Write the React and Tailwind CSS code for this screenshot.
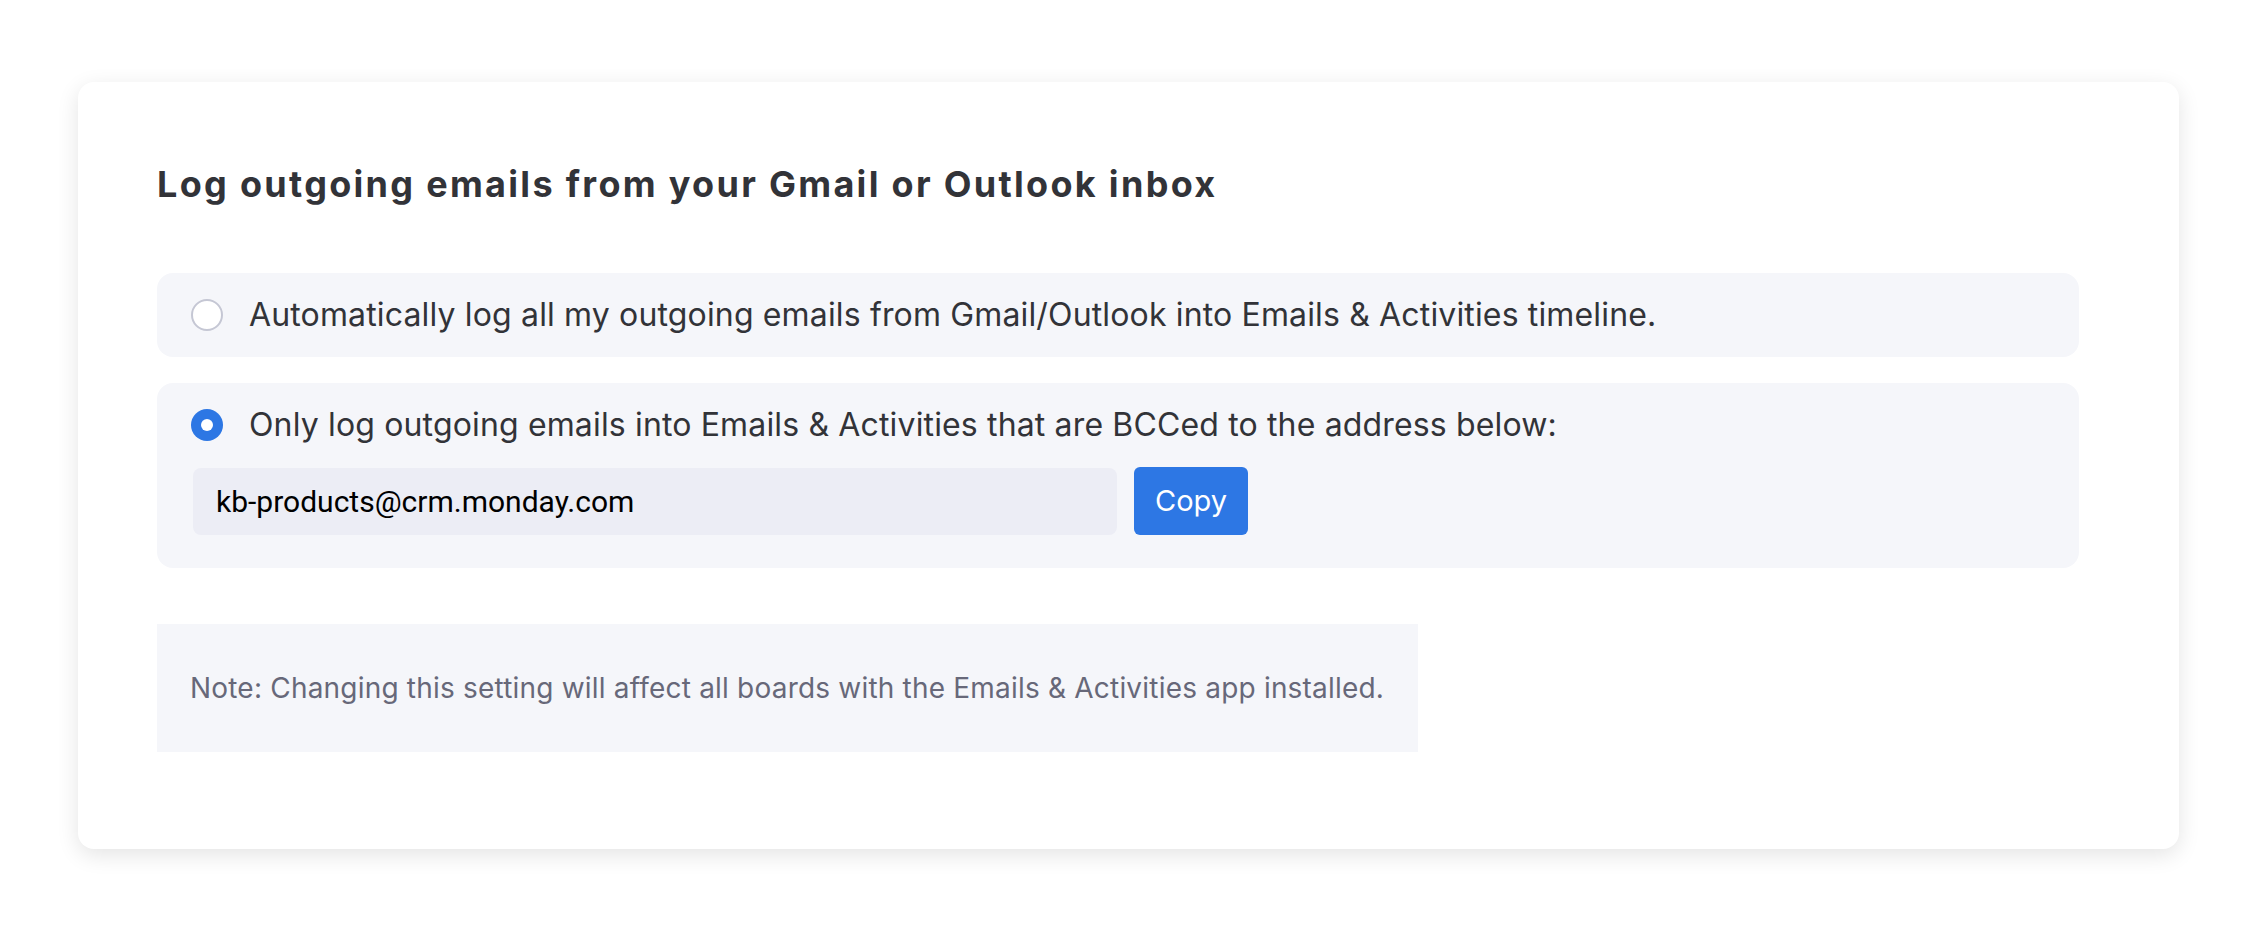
import { useState } from 'react'

const BCC_ADDRESS = 'kb-products@crm.monday.com'

function Radio({ checked }) {
  if (checked) {
    return (
      <span className="flex h-[32px] w-[32px] shrink-0 items-center justify-center rounded-full bg-[#2d77e4]">
        <span className="h-[12px] w-[12px] rounded-full bg-white" />
      </span>
    )
  }
  return <span className="h-[32px] w-[32px] shrink-0 rounded-full border-2 border-[#c5c7d4] bg-white" />
}

export default function App() {
  const [mode, setMode] = useState('bcc')

  return (
    <div className="min-h-screen bg-white pt-[82px] font-['Inter',sans-serif]">
      <div className="mx-[78px] h-[767px] rounded-2xl bg-white pl-[79px] pr-[100px] pt-[78px] shadow-[0_6px_22px_rgba(0,0,0,0.11)]">
        <h2 className="mb-[65px] text-[36px] font-bold leading-[48px] tracking-[2.3px] text-[#323338]">
          Log outgoing emails from your Gmail or Outlook inbox
        </h2>

        <div className="flex flex-col gap-[26px]">
          <button
            type="button"
            onClick={() => setMode('all')}
            className="flex h-[84px] items-center gap-[26px] rounded-2xl bg-[#f5f6fa] px-[34px] text-left"
          >
            <Radio checked={mode === 'all'} />
            <span className="text-[32px] leading-[32px] tracking-[0.15px] text-[#323338]">
              Automatically log all my outgoing emails from Gmail/Outlook into Emails &amp; Activities timeline.
            </span>
          </button>

          <div className="flex flex-col gap-[26px] rounded-2xl bg-[#f5f6fa] px-[34px] pb-[33px] pt-[26px]">
            <button type="button" onClick={() => setMode('bcc')} className="flex items-center gap-[26px] text-left">
              <Radio checked={mode === 'bcc'} />
              <span className="text-[32px] leading-[32px] tracking-[0.15px] text-[#323338]">
                Only log outgoing emails into Emails &amp; Activities that are BCCed to the address below:
              </span>
            </button>
            <div className="flex items-center gap-[17px] pl-[2px]">
              <div className="flex h-[67px] w-[924px] items-center rounded-lg bg-[#ecedf5] px-[23px] font-['Roboto',sans-serif] text-[30px] text-black">
                {BCC_ADDRESS}
              </div>
              <button
                type="button"
                className="h-[68px] w-[114px] rounded-md bg-[#2d77e4] text-[29px] text-white"
              >
                Copy
              </button>
            </div>
          </div>
        </div>

        <div className="mt-[56px] flex h-[128px] w-[1261px] items-center bg-[#f5f6fa] px-[33px] text-[28px] tracking-[0.2px] text-[#676879]">
          Note: Changing this setting will affect all boards with the Emails &amp; Activities app installed.
        </div>
      </div>
    </div>
  )
}
